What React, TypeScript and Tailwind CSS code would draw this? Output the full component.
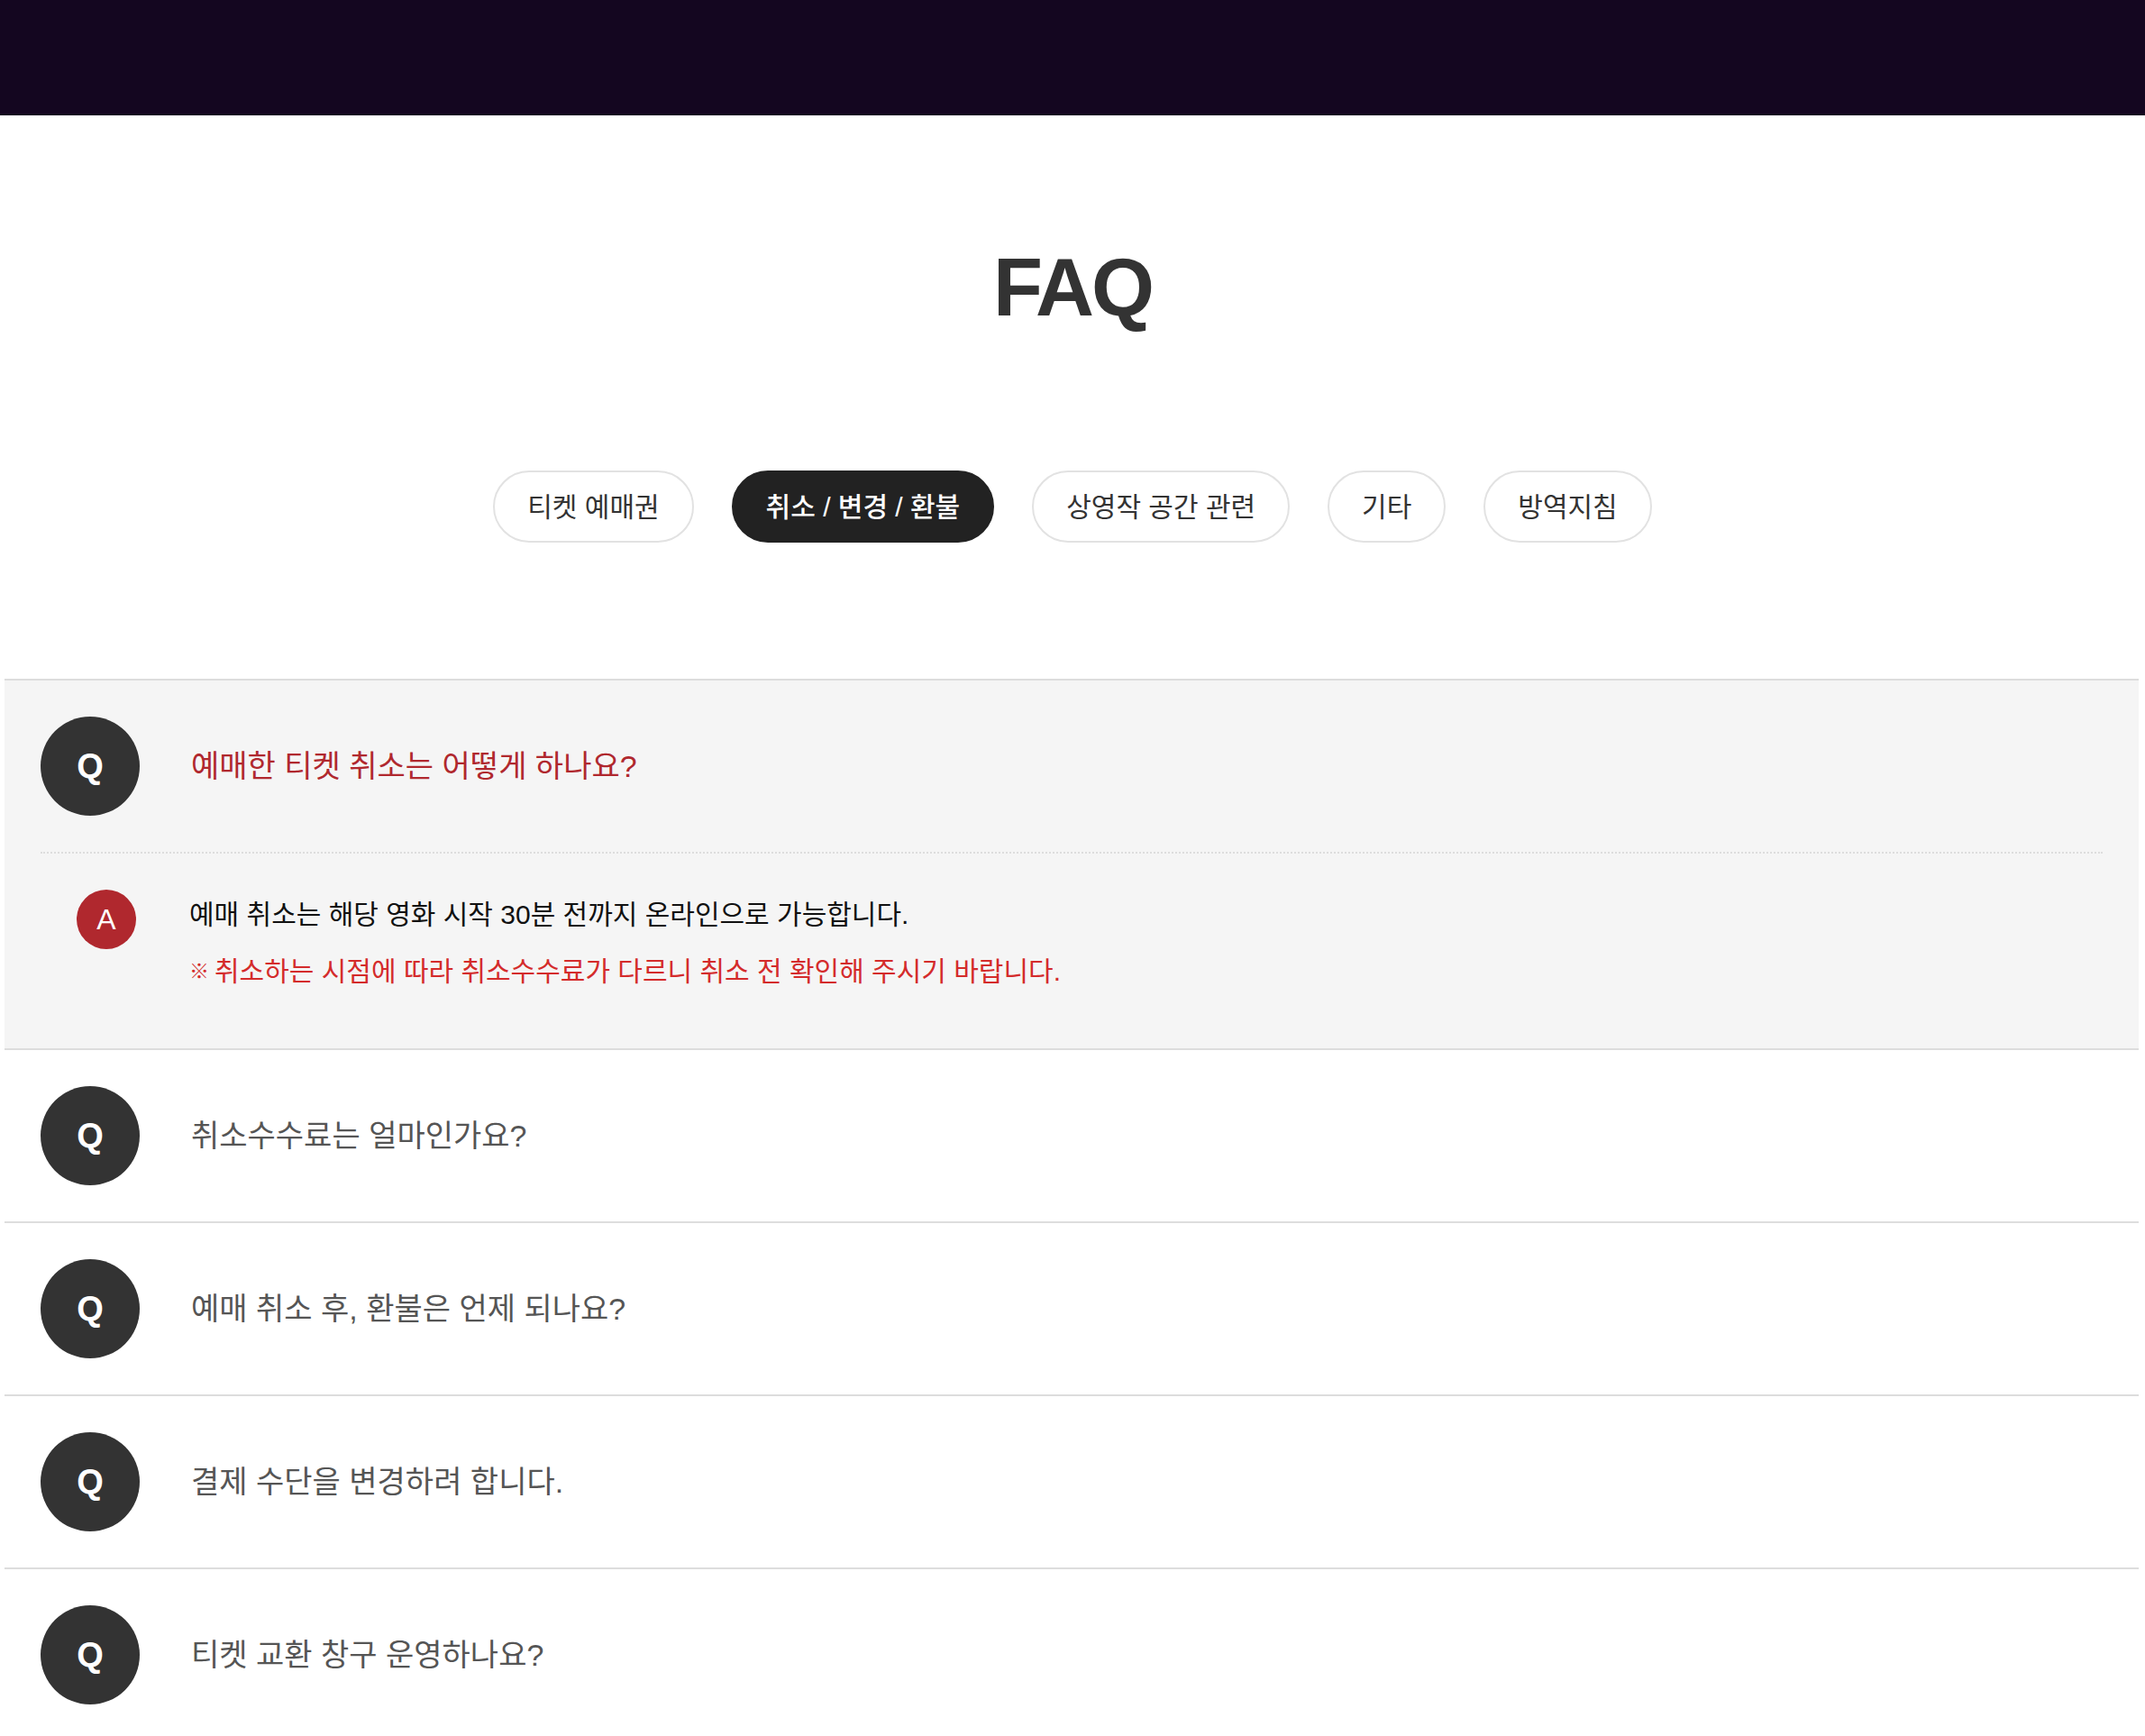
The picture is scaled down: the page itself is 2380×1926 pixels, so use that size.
import { useState } from "react"

const tabs = ["티켓 예매권", "취소 / 변경 / 환불", "상영작 공간 관련", "기타", "방역지침"]

const faqs = [
  {
    q: "예매한 티켓 취소는 어떻게 하나요?",
    a: "예매 취소는 해당 영화 시작 30분 전까지 온라인으로 가능합니다.",
    note: "취소하는 시점에 따라 취소수수료가 다르니 취소 전 확인해 주시기 바랍니다.",
  },
  { q: "취소수수료는 얼마인가요?" },
  { q: "예매 취소 후, 환불은 언제 되나요?" },
  { q: "결제 수단을 변경하려 합니다." },
  { q: "티켓 교환 창구 운영하나요?" },
]

const font = "font-['Liberation_Sans','Noto_Sans_CJK_KR',sans-serif]"

export default function App() {
  const [activeTab, setActiveTab] = useState(1)
  const [open, setOpen] = useState(0)

  return (
    <div className={`min-h-screen bg-white ${font}`}>
      <header className="h-[128px] bg-[#140620]" />

      <h1 className="mt-[146px] text-center text-[90px] font-bold leading-none tracking-[-3px] text-[#333]">FAQ</h1>

      <nav className="mt-[158px] flex justify-center gap-[42px]">
        {tabs.map((tab, i) => (
          <button
            key={tab}
            onClick={() => setActiveTab(i)}
            className={
              i === activeTab
                ? "h-[80px] rounded-full border-2 border-[#222] bg-[#222] px-[36px] text-[30px] font-medium text-white"
                : "h-[80px] rounded-full border-2 border-[#e2e2e2] bg-white px-[36px] text-[30px] text-[#333]"
            }
          >
            {tab}
          </button>
        ))}
      </nav>

      <ul className="ml-[5px] mr-[7px] mt-[151px] border-t-2 border-[#ddd]">
        {faqs.map((item, i) => {
          const isOpen = open === i
          return (
            <li key={item.q} className={`border-b-2 border-[#ddd] ${isOpen ? "bg-[#f5f5f5]" : "bg-white"}`}>
              <button
                onClick={() => setOpen(isOpen ? -1 : i)}
                className="flex w-full items-center gap-[57px] px-[40px] py-[40px] text-left"
              >
                <span className="flex h-[110px] w-[110px] shrink-0 items-center justify-center rounded-full bg-[#333] text-[38px] font-bold text-white">
                  Q
                </span>
                <span className={`text-[34px] ${isOpen ? "text-[#b0282e]" : "text-[#555]"}`}>{item.q}</span>
              </button>

              {isOpen && item.a && (
                <div className="mx-[40px] flex gap-[59px] border-t-2 border-dotted border-[#ddd] pb-[57px] pl-[40px] pt-[40px]">
                  <span className="flex h-[66px] w-[66px] shrink-0 items-center justify-center rounded-full bg-[#b0282e] text-[32px] text-white">
                    A
                  </span>
                  <div>
                    <p className="text-[30px] leading-[56px] text-[#111]">{item.a}</p>
                    <p className="mt-[7px] text-[30px] leading-[56px] text-[#d42b2b]">
                      <span className="mr-[6px] align-top text-[22px] font-bold">※</span>
                      {item.note}
                    </p>
                  </div>
                </div>
              )}
            </li>
          )
        })}
      </ul>
    </div>
  )
}
